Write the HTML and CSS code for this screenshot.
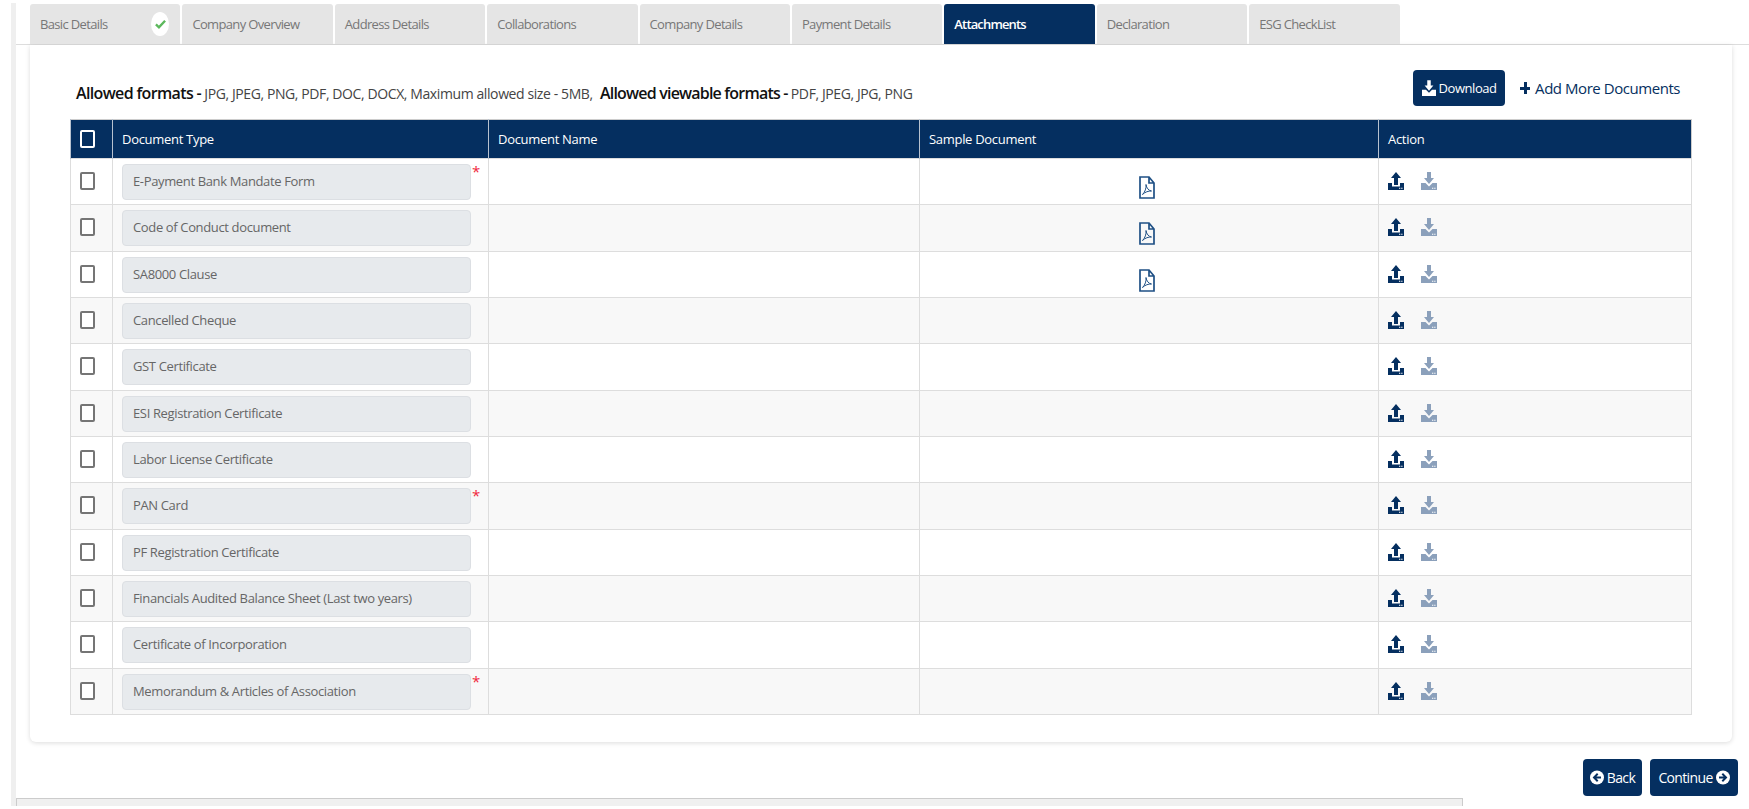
FILE: index.html
```html
<!DOCTYPE html>
<html lang="en">
<head>
  <meta charset="UTF-8" />
  <title>Attachments</title>
  <link rel="stylesheet" href="styles.css">
</head>
<body>
  <!-- shared icons -->
  <svg class="icon-defs" aria-hidden="true">
    <symbol id="ico-upload" viewBox="0 0 16 18">
      <path d="M8 0 13 6H10V13H6V6H3Z"/>
      <path d="M0 11H4V14.5H12V11H16V18H0Z"/>
      <path d="M11 15.7h1.3v1h-1.3zM13.2 15.7h1.3v1h-1.3z" fill="#fff"/>
    </symbol>
    <symbol id="ico-download" viewBox="0 0 16 18">
      <path d="M6 0H10V6H13L8 12 3 6H6Z"/>
      <path d="M0 11H4.5L8 14.5 11.5 11H16V18H0Z"/>
      <path d="M11 15.7h1.3v1h-1.3zM13.2 15.7h1.3v1h-1.3z" fill="#fff"/>
    </symbol>
    <symbol id="ico-pdf" viewBox="0 0 16 23">
      <path d="M1 1H10L15 7V22H1Z M10 1V7H15" fill="none" stroke="currentColor" stroke-width="1.7"/>
      <path d="M3.5 18.5C6 16 7.5 12 7 8.5C7.5 12 9.5 14.5 12.5 15C9.5 14.8 6 16 3.5 18.5Z" fill="none" stroke="currentColor" stroke-width="1"/>
    </symbol>
    <symbol id="ico-back" viewBox="0 0 14 14">
      <circle cx="7" cy="7" r="7" fill="#fff"/>
      <path d="M7 2.6 2.6 7 7 11.4 8.4 10 6.4 8.1H11V5.9H6.4L8.4 4Z" fill="#052f60"/>
    </symbol>
    <symbol id="ico-next" viewBox="0 0 14 14">
      <circle cx="7" cy="7" r="7" fill="#fff"/>
      <path d="M7 2.6 11.4 7 7 11.4 5.6 10 7.6 8.1H3V5.9H7.6L5.6 4Z" fill="#052f60"/>
    </symbol>
  </svg>

  <div class="page">
    <!-- tabs -->
    <div class="tabs">
      <div class="tab tab-done">Basic Details
        <span class="tick"><svg viewBox="0 0 12 10"><path d="M1 5.5 4.3 8.6 11 1.5" fill="none" stroke="#5cb85c" stroke-width="2.6"/></svg></span>
      </div>
      <div class="tab">Company Overview</div>
      <div class="tab">Address Details</div>
      <div class="tab">Collaborations</div>
      <div class="tab">Company Details</div>
      <div class="tab">Payment Details</div>
      <div class="tab active">Attachments</div>
      <div class="tab">Declaration</div>
      <div class="tab">ESG CheckList</div>
    </div>

    <div class="card">
      <div class="card-top">
        <p class="formats">
          <b>Allowed formats -</b> JPG, JPEG, PNG, PDF, DOC, DOCX, Maximum allowed size - 5MB,
          <b>Allowed viewable formats -</b> PDF, JPEG, JPG, PNG
        </p>
        <div class="top-actions">
          <button class="btn btn-download"><svg class="ico-sm"><use href="#ico-download"/></svg> Download</button>
          <a class="add-more"><span class="plus"></span>Add More Documents</a>
        </div>
      </div>

      <table class="docs">
        <thead>
          <tr>
            <th class="col-check"><span class="check check-head"></span></th>
            <th class="col-type">Document Type</th>
            <th class="col-name">Document Name</th>
            <th class="col-sample">Sample Document</th>
            <th>Action</th>
          </tr>
        </thead>
        <tbody>
          <tr>
            <td class="cell-check"><span class="check"></span></td>
            <td><div class="type-wrap"><div class="type-box">E-Payment Bank Mandate Form</div><span class="star">*</span></div></td>
            <td></td>
            <td class="cell-sample"><svg class="ico-pdf"><use href="#ico-pdf"/></svg></td>
            <td><div class="acts"><svg class="ico up"><use href="#ico-upload"/></svg><svg class="ico down"><use href="#ico-download"/></svg></div></td>
          </tr>
          <tr>
            <td class="cell-check"><span class="check"></span></td>
            <td><div class="type-wrap"><div class="type-box">Code of Conduct document</div></div></td>
            <td></td>
            <td class="cell-sample"><svg class="ico-pdf"><use href="#ico-pdf"/></svg></td>
            <td><div class="acts"><svg class="ico up"><use href="#ico-upload"/></svg><svg class="ico down"><use href="#ico-download"/></svg></div></td>
          </tr>
          <tr>
            <td class="cell-check"><span class="check"></span></td>
            <td><div class="type-wrap"><div class="type-box">SA8000 Clause</div></div></td>
            <td></td>
            <td class="cell-sample"><svg class="ico-pdf"><use href="#ico-pdf"/></svg></td>
            <td><div class="acts"><svg class="ico up"><use href="#ico-upload"/></svg><svg class="ico down"><use href="#ico-download"/></svg></div></td>
          </tr>
          <tr>
            <td class="cell-check"><span class="check"></span></td>
            <td><div class="type-wrap"><div class="type-box">Cancelled Cheque</div></div></td>
            <td></td>
            <td></td>
            <td><div class="acts"><svg class="ico up"><use href="#ico-upload"/></svg><svg class="ico down"><use href="#ico-download"/></svg></div></td>
          </tr>
          <tr>
            <td class="cell-check"><span class="check"></span></td>
            <td><div class="type-wrap"><div class="type-box">GST Certificate</div></div></td>
            <td></td>
            <td></td>
            <td><div class="acts"><svg class="ico up"><use href="#ico-upload"/></svg><svg class="ico down"><use href="#ico-download"/></svg></div></td>
          </tr>
          <tr>
            <td class="cell-check"><span class="check"></span></td>
            <td><div class="type-wrap"><div class="type-box">ESI Registration Certificate</div></div></td>
            <td></td>
            <td></td>
            <td><div class="acts"><svg class="ico up"><use href="#ico-upload"/></svg><svg class="ico down"><use href="#ico-download"/></svg></div></td>
          </tr>
          <tr>
            <td class="cell-check"><span class="check"></span></td>
            <td><div class="type-wrap"><div class="type-box">Labor License Certificate</div></div></td>
            <td></td>
            <td></td>
            <td><div class="acts"><svg class="ico up"><use href="#ico-upload"/></svg><svg class="ico down"><use href="#ico-download"/></svg></div></td>
          </tr>
          <tr>
            <td class="cell-check"><span class="check"></span></td>
            <td><div class="type-wrap"><div class="type-box">PAN Card</div><span class="star">*</span></div></td>
            <td></td>
            <td></td>
            <td><div class="acts"><svg class="ico up"><use href="#ico-upload"/></svg><svg class="ico down"><use href="#ico-download"/></svg></div></td>
          </tr>
          <tr>
            <td class="cell-check"><span class="check"></span></td>
            <td><div class="type-wrap"><div class="type-box">PF Registration Certificate</div></div></td>
            <td></td>
            <td></td>
            <td><div class="acts"><svg class="ico up"><use href="#ico-upload"/></svg><svg class="ico down"><use href="#ico-download"/></svg></div></td>
          </tr>
          <tr>
            <td class="cell-check"><span class="check"></span></td>
            <td><div class="type-wrap"><div class="type-box">Financials Audited Balance Sheet (Last two years)</div></div></td>
            <td></td>
            <td></td>
            <td><div class="acts"><svg class="ico up"><use href="#ico-upload"/></svg><svg class="ico down"><use href="#ico-download"/></svg></div></td>
          </tr>
          <tr>
            <td class="cell-check"><span class="check"></span></td>
            <td><div class="type-wrap"><div class="type-box">Certificate of Incorporation</div></div></td>
            <td></td>
            <td></td>
            <td><div class="acts"><svg class="ico up"><use href="#ico-upload"/></svg><svg class="ico down"><use href="#ico-download"/></svg></div></td>
          </tr>
          <tr>
            <td class="cell-check"><span class="check"></span></td>
            <td><div class="type-wrap"><div class="type-box">Memorandum &amp; Articles of Association</div><span class="star">*</span></div></td>
            <td></td>
            <td></td>
            <td><div class="acts"><svg class="ico up"><use href="#ico-upload"/></svg><svg class="ico down"><use href="#ico-download"/></svg></div></td>
          </tr>
        </tbody>
      </table>
    </div>

    <!-- back / continue -->
    <div class="footer-actions">
      <button class="btn btn-back"><svg class="ico-round"><use href="#ico-back"/></svg> Back</button>
      <button class="btn btn-next">Continue <svg class="ico-round"><use href="#ico-next"/></svg></button>
    </div>

    <div class="bottom-panel"></div>
  </div>
</body>
</html>
```

FILE: styles.css
```css
html, body {
  margin: 0;
  height: 809px;
  overflow: hidden;
  background-color: #fff;
}

body {
  font-family: "Open Sans", "Liberation Sans", sans-serif;
  font-size: 13px;
  color: #555;
}

.icon-defs {
  display: none;
}

.page {
  margin: 3px 0 0 11px;
  height: 803px;
  border-left: 5px solid #efefef;
  overflow: hidden;
  box-sizing: border-box;
  padding-top: 1px;
}

/* tabs */
.tabs {
  display: flex;
  gap: 2px;
  padding-left: 14px;
  height: 40px;
  border-bottom: 1px solid #ddd;
}

.tab {
  width: 150.4px;
  box-sizing: border-box;
  padding: 11px 0 0 10px;
  background-color: #e5e5e5;
  border-radius: 3px 3px 0 0;
  color: #777;
  font-size: 13px;
  letter-spacing: -0.65px;
  position: relative;
}

.tab.active {
  background-color: #052f60;
  color: #fff;
  font-weight: 600;
  letter-spacing: -0.85px;
}

.tick {
  position: absolute;
  left: 121px;
  top: 8px;
  width: 18px;
  height: 24px;
  border-radius: 50%;
  background-color: #fff;
  display: flex;
  align-items: center;
  justify-content: center;
}

.tick svg {
  width: 11px;
  height: 10px;
}

/* card */
.card {
  margin-left: 14px;
  width: 1702px;
  height: 697px;
  box-sizing: border-box;
  padding: 17px 0 0 40px;
  background-color: #fff;
  border-radius: 0 0 6px 6px;
  box-shadow: 0 1px 5px rgba(0, 0, 0, 0.14);
}

.card-top {
  display: flex;
  align-items: flex-start;
  justify-content: space-between;
  width: 1622px;
  height: 57px;
}

.formats {
  margin: 20px 0 0 6px;
  font-size: 14px;
  color: #444;
  letter-spacing: -0.4px;
}

.formats b {
  font-size: 16px;
  font-weight: 600;
  color: #111;
  letter-spacing: -0.65px;
}

.formats b + b {
  margin-left: 4px;
  letter-spacing: -0.8px;
}

.top-actions {
  display: flex;
  align-items: center;
  gap: 15px;
  margin-top: 8px;
}

.btn {
  border: 0;
  border-radius: 4px;
  background-color: #052f60;
  color: #fff;
  font-family: inherit;
  font-size: 13px;
  letter-spacing: -0.45px;
  display: flex;
  align-items: center;
  justify-content: center;
  gap: 3px;
  padding: 0;
}

.btn-download {
  width: 92px;
  height: 36px;
}

.ico-sm {
  width: 14px;
  height: 16px;
  fill: #fff;
}

.add-more {
  display: flex;
  align-items: center;
  gap: 5px;
  margin-right: 12px;
  color: #052f60;
  font-size: 15px;
  letter-spacing: -0.45px;
}

.plus {
  width: 10px;
  height: 12px;
  background:
    linear-gradient(#052f60, #052f60) center / 3px 100% no-repeat,
    linear-gradient(#052f60, #052f60) center / 100% 3px no-repeat;
}

/* table */
.docs {
  width: 1622px;
  table-layout: fixed;
  border-collapse: collapse;
  border: 1px solid #ccc;
}

.docs th {
  height: 39px;
  padding: 0 0 0 9px;
  box-sizing: border-box;
  background-color: #052f60;
  border-left: 1px solid #b8c2cf;
  color: #fff;
  font-size: 13px;
  font-weight: 400;
  letter-spacing: -0.3px;
  text-align: left;
}

.docs td {
  height: 46.33px;
  padding: 0 0 0 9px;
  box-sizing: border-box;
  border: 1px solid #ddd;
  vertical-align: top;
}

.docs tbody tr:nth-child(even) td {
  background-color: #f8f8f8;
}

.docs .col-check {
  width: 42px;
  padding-left: 0;
}

.docs .col-type {
  width: 376px;
}

.docs .col-name {
  width: 431px;
}

.docs .col-sample {
  width: 459px;
}

.check {
  display: block;
  width: 15px;
  height: 18px;
  margin-left: 9px;
  box-sizing: border-box;
  border: 2px solid #757575;
  border-radius: 2px;
  background-color: #fff;
}

.check-head {
  border-color: #fff;
  background-color: transparent;
}

.docs .cell-check {
  padding: 13px 0 0;
}

.type-wrap {
  display: flex;
  align-items: flex-start;
  gap: 1px;
  padding-top: 5px;
}

.type-box {
  width: 349px;
  height: 36px;
  box-sizing: border-box;
  padding-left: 10px;
  line-height: 32px;
  background-color: #e7eaed;
  border: 1px solid #dcdfe3;
  border-radius: 4px;
  color: #666;
  font-size: 13px;
  letter-spacing: -0.36px;
  white-space: nowrap;
}

.star {
  color: #f0263c;
  font-size: 15px;
  line-height: 15px;
}

.docs .cell-sample {
  padding: 17px 5px 0 0;
  text-align: center;
}

.ico-pdf {
  width: 16px;
  height: 23px;
  color: #1f5085;
}

.acts {
  display: flex;
  gap: 17px;
  padding-top: 13px;
}

.ico {
  width: 16px;
  height: 18px;
}

.up {
  fill: #052f60;
}

.down {
  fill: #8ba0bb;
}

/* footer buttons */
.footer-actions {
  display: flex;
  justify-content: flex-end;
  gap: 8px;
  padding-right: 11px;
  margin-top: 17px;
}

.footer-actions .btn {
  height: 37px;
  font-size: 14px;
  letter-spacing: -0.65px;
}

.btn-back {
  width: 59px;
}

.btn-next {
  width: 88px;
}

.ico-round {
  width: 14px;
  height: 15px;
}

.bottom-panel {
  width: 1447px;
  height: 20px;
  margin-top: 2px;
  background-color: #f0f0f0;
  border: 1px solid #ccc;
  box-sizing: border-box;
}
```
